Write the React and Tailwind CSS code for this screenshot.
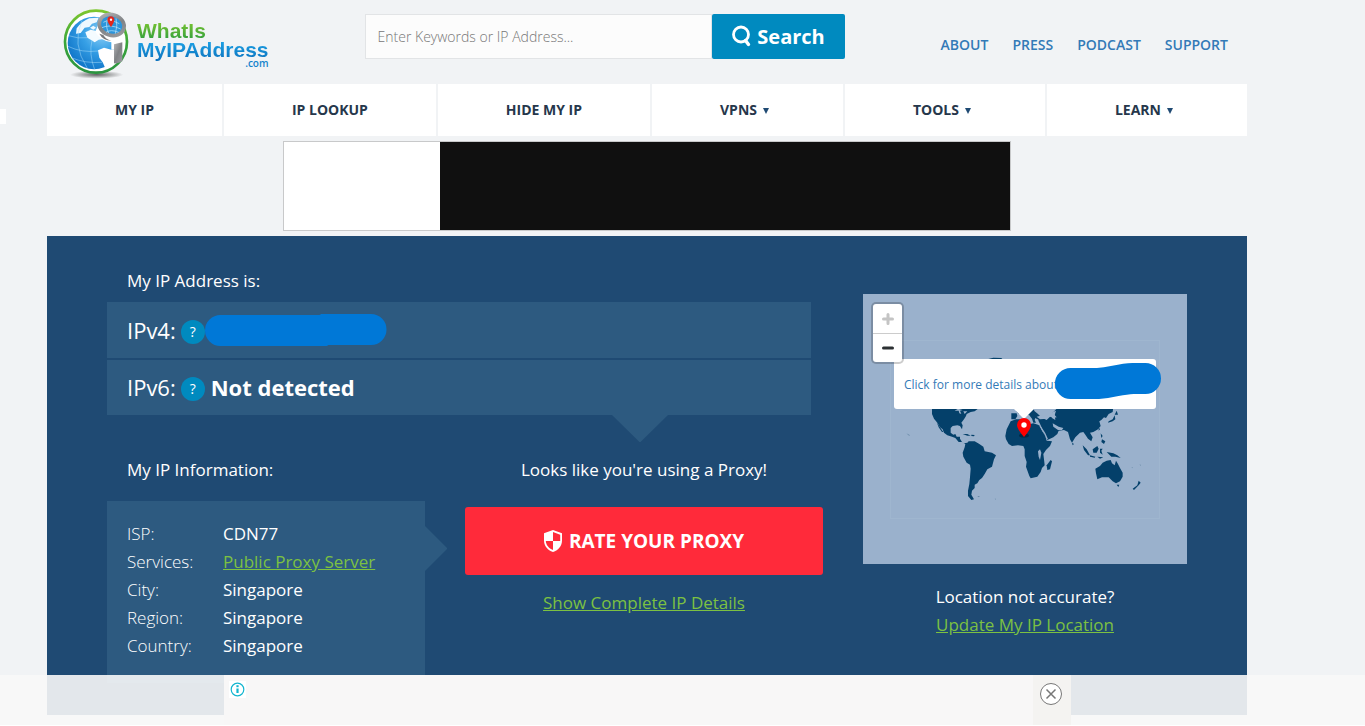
const infoRows = [
  ["ISP:", "CDN77"],
  ["Services:", "Public Proxy Server"],
  ["City:", "Singapore"],
  ["Region:", "Singapore"],
  ["Country:", "Singapore"],
];

const menu = [
  ["MY IP", false],
  ["IP LOOKUP", false],
  ["HIDE MY IP", false],
  ["VPNS", true],
  ["TOOLS", true],
  ["LEARN", true],
];

function LogoMark() {
  return (
    <svg className="h-[72px] w-[68px] shrink-0" viewBox="36 20 204 216" aria-hidden="true">
      <defs>
        <linearGradient id="ring" x1="0" y1="0" x2="0" y2="1">
          <stop offset="0" stopColor="#7cc62e" />
          <stop offset="0.5" stopColor="#3aa63a" />
          <stop offset="1" stopColor="#2c9440" />
        </linearGradient>
        <radialGradient id="sea" cx="0.65" cy="0.3" r="0.8">
          <stop offset="0" stopColor="#8fd0f6" />
          <stop offset="0.45" stopColor="#37a0e6" />
          <stop offset="1" stopColor="#0a6fc4" />
        </radialGradient>
        <radialGradient id="shade">
          <stop offset="0" stopColor="#333" stopOpacity="0.75" />
          <stop offset="1" stopColor="#333" stopOpacity="0" />
        </radialGradient>
        <linearGradient id="metal" x1="0" y1="0" x2="1" y2="1">
          <stop offset="0" stopColor="#b5b6b8" />
          <stop offset="0.5" stopColor="#808285" />
          <stop offset="1" stopColor="#9b9da0" />
        </linearGradient>
      </defs>
      <ellipse cx="140" cy="223" rx="80" ry="12" fill="url(#shade)" />
      <circle cx="138" cy="124" r="93" fill="#fff" stroke="url(#ring)" strokeWidth="8" />
      <circle cx="132" cy="128" r="79" fill="url(#sea)" />
      <path d="M80 84Q96 62 118 54L146 52L140 66L126 70L118 80L104 82L92 98L78 100Z" fill="#eef8fe" />
      <path d="M106 96L122 88L138 92L152 104L160 116L146 118L134 126L122 118L112 112Z" fill="#f4fbff" />
      <path d="M120 82l10-6 8 6-8 6z" fill="#eef8fe" />
      <path d="M144 150L162 142L184 148L212 150L206 176Q192 196 166 204L158 186L148 172Z" fill="#fff" />
      <path d="M54 138Q96 158 144 152M64 172Q106 190 156 186M96 60Q64 130 112 204M126 120Q116 160 134 208M56 106Q84 116 112 112" fill="none" stroke="#a9dcf8" strokeWidth="1.5" />
      <path d="M136 94Q150 120 184 126V148H222L220 116L224 80L150 60Z" fill="#fff" />
      <path d="M148 100Q158 120 184 121Q166 116 160 104Z" fill="#77797c" />
      <path d="M192 132L217 126V183Q206 190 192 189Z" fill="url(#metal)" />
      <ellipse cx="185" cy="74" rx="38" ry="31" transform="rotate(18 185 74)" fill="#2b95dc" stroke="url(#metal)" strokeWidth="11" />
      <path d="M160 66Q178 54 208 70M156 82Q180 70 212 86M168 96Q182 86 206 96M174 54Q164 74 176 98M198 54Q204 76 196 100" fill="none" stroke="#c3e8fb" strokeWidth="2" />
      <path d="M183 80Q172 65 172 58A10.500 10.500 0 0 1 193 58Q193 65 183 80Z" fill="#e1261c" />
      <circle cx="183" cy="58" r="3.500" fill="#fff" />
    </svg>
  );
}

function WorldMap() {
  return (
    <svg className="absolute inset-0 h-full w-full" viewBox="0 0 324 270" aria-hidden="true">
      <rect x="27.500" y="46.500" width="269" height="178" fill="none" stroke="#9fb6cf" />
      <g transform="translate(-3 46) scale(.33333)" fill="#04406a">
        <path d="M382 58L400 53L424 54L430 60H382Z" />
        <path d="M216 200L216 222L222 236L232 248L240 262L248 268L252 278L262 286L276 290L286 294L296 306L306 306L300 296L300 290L290 290L286 282L280 284L272 278L272 264L278 258L292 256L300 258L306 268L308 256L304 248L312 238L318 228L320 222L332 216L344 214L354 206L354 200Z" />
        <path d="M230 246L240 262L250 276L246 276L236 262Z" />
        <path d="M308 282l14 0 10 5-10 0zM334 284l10 1-2 4-8-1z" />
        <path d="M300 304L312 310L322 308L326 304L344 304L358 312L370 320L374 334L396 338L408 346L402 358L396 380L382 388L374 402L366 414L358 420L352 430L344 434L344 444L336 452L334 464L342 478L334 480L324 468L324 452L328 432L330 412L332 386L330 374L320 368L310 350L308 338L314 322L316 312Z" />
        <path d="M454 220H470L472 228L466 238H454ZM468 212L480 206H520L524 214L534 222L540 228L548 228V238L532 238L526 234L524 240L528 248L520 248L516 236L508 226L500 222L494 214L484 222L476 222Z" />
        <path d="M452 244L468 238L488 238L496 240L498 248L510 252L520 250L534 254L540 258L546 272L556 288L560 302L576 304L570 318L558 330L550 342L552 358L554 376L546 384L542 396L532 410L512 415L508 408L498 380L500 366L494 348L494 328L490 318L474 316L456 318L446 312L438 298L436 288L440 268Z" />
        <path d="M572 360L576 364L570 388L562 390L560 376Z" />
        <path d="M542 256L536 244L534 236L552 236L560 240L570 230L580 234L590 232L578 218L590 206L600 200L760 200L758 216L746 222L738 234L732 232L724 240L718 244L722 258L714 268L700 276L690 278L698 292L694 304L684 296L676 284L670 276L660 278L646 292L636 308L630 298L624 276L612 270L596 272L592 282L580 292L562 300L552 282Z" />
        <path d="M578 216L588 212L584 226L586 240L576 234ZM530 230l16-4 24 2-10 8-20 2z" fill="#9ab1cc" />
        <path d="M578 250l18 10 14 4-4 6-12 0-14-10z" fill="#9ab1cc" />
        <path d="M540 258L554 280L562 298" fill="none" stroke="#9ab1cc" strokeWidth="4" />
        <path d="M534 334l6-6 4 10-4 22-4-10z" fill="#9ab1cc" />
        <path d="M284 212l10-6 14 4-8 2 4 10-6-2-2-8zM310 214l12 0-8 8z" fill="#9ab1cc" />
        <path d="M770 212l4 12-10 0zM764 226l2 12-8 6-14 4 2-4 12-6zM716 262l4 6-4 4zM722 280l6 8-4 6zM726 298l10 6-4 8-8-6zM636 308l6 4-4 4z" />
        <path d="M668 316L680 328L690 346L684 346L672 330ZM690 346L706 350L704 353L690 350ZM698 328L712 318L716 326L710 338L700 338ZM720 326l8 0-4 6 4 12-8-6zM712 350l18 2-10 4zM740 336L760 340L772 346L782 354L766 350L754 350Z" />
        <path d="M706 386L720 378L728 368L740 362L752 360L756 370L764 376L768 362L774 372L780 384L788 398L788 410L780 424L768 430L758 424L746 412L726 412L712 418L708 400Z" />
        <path d="M770 434l8 0-3 7zM836 422l6 6-6 8-14 14-4-4 14-10z" />
        <path d="M139 280l10 5-1 3zM286 331h6M352 468l8 0-4 4zM404 476h4v3zM814 382h4v3zM838 374h5v3zM786 346l20 8" fill="#6688a6" />
      </g>
    </svg>
  );
}

function Marker() {
  return (
    <svg className="absolute left-[153px] top-[123px] h-[22px] w-4" viewBox="0 0 16 22" role="img" aria-label="Location">
      <ellipse cx="8" cy="18.500" rx="5" ry="2" fill="#001c30" opacity="0.6" />
      <path d="M8 20Q1 12 1 8A7 7 0 0 1 15 8Q15 12 8 20Z" fill="#f00" />
      <circle cx="8" cy="8" r="2.700" fill="#fff" />
    </svg>
  );
}

function HelpButton({ label }) {
  return (
    <button aria-label={label} className="mt-1 ml-[5px] h-6 w-6 shrink-0 rounded-full bg-[#008abf] text-sm leading-6">
      ?
    </button>
  );
}

export default function App() {
  return (
    <div className="relative min-h-screen bg-[#f1f3f5] pr-[71px] font-['Open_Sans',sans-serif]">
      <div className="absolute left-0 top-[109px] h-[15px] w-1.5 bg-white" />

      <div className="mx-auto max-w-[1200px] pb-[11px]">
        <header className="flex h-[84px] items-start justify-between pl-[15px] pr-[19px]">
          <a href="#" aria-label="WhatIsMyIPAddress.com" className="flex pt-[7px]">
            <LogoMark />
            <span className="ml-[7px] flex flex-col pt-[14px] font-['Liberation_Sans',sans-serif] text-[21px] leading-[19px] font-bold">
              <span className="self-start bg-linear-to-b from-[#7cc62e] to-[#2c9f3c] bg-clip-text text-transparent">WhatIs</span>
              <span className="-mb-1 bg-linear-to-b from-[#1fa5e8] to-[#0b6cb8] bg-clip-text pb-1 text-transparent">MyIPAddress</span>
              <span className="self-end font-['Open_Sans',sans-serif] text-[10px] leading-[8px] font-semibold text-[#1583cc]">.com</span>
            </span>
          </a>

          <form className="mt-[14px] flex h-[45px] w-[480px]">
            <input
              type="text"
              aria-label="Enter Keywords or IP Address"
              placeholder="Enter Keywords or IP Address..."
              className="min-w-0 flex-1 border border-[#e2e4e6] bg-[#fcfcfc] px-3 text-sm font-light placeholder:text-[#777]"
            />
            <button type="button" className="flex w-[133px] items-center justify-center gap-1 rounded-[2px] bg-[#008abf] text-xl font-bold text-white">
              <svg className="h-6 w-[22px]" viewBox="0 0 22 24" fill="none" stroke="currentColor" aria-hidden="true">
                <circle cx="10" cy="9.500" r="7.500" strokeWidth="2.800" />
                <path d="M14.500 15.500L17.500 19.500" strokeWidth="3.400" strokeLinecap="round" />
              </svg>
              Search
            </button>
          </form>

          <nav className="flex gap-6 pt-[34px] text-sm leading-[22px] font-semibold text-[#337ab7]">
            <a href="#">ABOUT</a>
            <a href="#">PRESS</a>
            <a href="#">PODCAST</a>
            <a href="#">SUPPORT</a>
          </nav>
        </header>

        <nav className="flex gap-0.5 text-sm font-bold text-[#26374b]">
          {menu.map(([label, drop]) => (
            <a key={label} href="#" className="flex h-[52px] flex-auto items-center justify-center gap-1.5 bg-white">
              {label}
              {drop && (
                <svg className="mt-0.5 mr-1.5 h-1.5 w-1.5" viewBox="0 0 6 6" fill="#1f4a73" aria-hidden="true">
                  <path d="M0 0H6L3 6Z" />
                </svg>
              )}
            </a>
          ))}
        </nav>

        <div className="mx-auto mt-[5px] flex h-[90px] max-w-[728px] border border-[#c8c9ca] bg-white pl-[156px]">
          <div className="flex-1 bg-[#101010]" />
        </div>

        <main className="mt-[5px] flex gap-10 bg-[#1f4a73] px-[60px] pb-8 text-[17px] leading-7 text-white">
          <div className="min-w-0 flex-1 pt-[31px]">
            <h1 className="pl-5">My IP Address is:</h1>
            <div className="relative mt-[7px] mr-3 flex flex-col gap-0.5 text-[22px]">
              <div className="flex h-14 items-center bg-[#2d5a80] pl-5">
                <span>IPv4:</span>
                <HelpButton label="What is IPv4?" />
                <svg className="h-8 w-[182px]" viewBox="0 0 182 32" aria-hidden="true">
                  <path d="M15.500 16.500H118L120 15.500H166" fill="none" stroke="#0078d7" strokeWidth="31" strokeLinecap="round" />
                </svg>
              </div>
              <div className="flex h-[55px] items-center bg-[#2d5a80] pb-0.5 pl-5">
                <span>IPv6:</span>
                <HelpButton label="What is IPv6?" />
                <strong className="ml-1.5 font-bold">Not detected</strong>
              </div>
              <svg className="absolute top-full right-[143px] h-[27px] w-14" viewBox="0 0 56 27" fill="#2d5a80" aria-hidden="true">
                <path d="M0 0H56L28 27.500Z" />
              </svg>
            </div>

            <div className="mt-[41px] flex gap-10">
              <section className="w-[318px] shrink-0">
                <h2 className="pl-5">My IP Information:</h2>
                <div className="relative mt-[17px] bg-[#2d5a80] px-5 pt-[19px] pb-[23px]">
                  <dl className="grid grid-cols-[96px_1fr]">
                    {infoRows.map(([k, v]) => (
                      <div key={k} className="contents">
                        <dt className="font-light">{k}</dt>
                        <dd>{k === "Services:" ? <a href="#" className="text-[#7cc142] underline">{v}</a> : v}</dd>
                      </div>
                    ))}
                  </dl>
                  <svg className="absolute top-6 left-full h-[46px] w-[22px]" viewBox="0 0 22 46" fill="#2d5a80" aria-hidden="true">
                    <path d="M0 1L22.500 23.500L0 46Z" />
                  </svg>
                </div>
              </section>
              <section className="flex min-w-0 flex-1 flex-col items-center">
                <h2>Looks like you're using a Proxy!</h2>
                <button className="mt-[23px] flex h-[68px] w-full items-center justify-center gap-[7px] rounded-[3px] bg-[#ff2a3a] text-[19px] font-bold">
                  <svg className="h-[22px] w-[18px]" viewBox="0 0 18 22" aria-hidden="true">
                    <path d="M9 0L18 3.300V10.500C18 16 14.500 20 9 22C3.500 20 0 16 0 10.500V3.300Z" fill="#fff" />
                    <path d="M9 2L16.200 4.700V11H9V20C4.800 18.200 2 15 1.800 11H9Z" fill="#ff2a3a" />
                  </svg>
                  RATE YOUR PROXY
                </button>
                <a href="#" className="mt-[14px] text-[#7cc142] underline">Show Complete IP Details</a>
              </section>
            </div>
          </div>

          <aside className="w-[324px] shrink-0 pt-[58px] text-center">
            <div className="relative h-[270px] bg-[#9ab1cc]">
              <WorldMap />
              <div className="absolute top-[65px] left-[31px] flex h-[50px] w-[262px] items-center rounded-[3px] bg-white pt-0.5 pl-2.5 text-xs">
                <a href="#" className="text-[#337ab7]">Click for more details about</a>
              </div>
              <svg className="absolute top-[115px] left-[151px] h-2.5 w-5" viewBox="0 0 20 10" fill="#fff" aria-hidden="true">
                <path d="M0 0H20L10 10Z" />
              </svg>
              <svg className="absolute top-[68px] left-[190px] h-[38px] w-[110px]" viewBox="0 0 110 38" aria-hidden="true">
                <path d="M17.500 21.500H45C60 20.500 66 17 80 16.500H92.500" fill="none" stroke="#0078d7" strokeWidth="31" strokeLinecap="round" />
              </svg>
              <Marker />
              <div className="absolute top-2.5 left-2.5 flex w-[29px] flex-col rounded-[3px] bg-white shadow-[0_0_0_2px_rgba(0,0,0,0.2)]">
                <button aria-label="Zoom in" className="flex h-[30px] items-center justify-center border-b border-[#ccc]">
                  <svg className="h-3 w-3" viewBox="0 0 12 12" stroke="#c4c4c4" strokeWidth="3" strokeLinecap="round" aria-hidden="true">
                    <path d="M1.500 6H10.500M6 1.500V10.500" />
                  </svg>
                </button>
                <button aria-label="Zoom out" className="flex h-7 items-center justify-center">
                  <svg className="h-3 w-3" viewBox="0 0 12 12" stroke="#2c3033" strokeWidth="3" strokeLinecap="round" aria-hidden="true">
                    <path d="M1.500 6H10.500" />
                  </svg>
                </button>
              </div>
            </div>
            <p className="mt-[19px]">Location not accurate?</p>
            <a href="#" className="text-[#7cc142] underline">Update My IP Location</a>
          </aside>
        </main>
      </div>

      <div className="fixed inset-x-0 bottom-0 flex h-[51px] border-b border-white bg-[#f8f8f8]/90 pr-[70px]">
        <div className="mx-auto flex w-[847px] justify-between bg-[#f8f7f7]">
          <button aria-label="Ad information" className="ml-[5px] mt-1.5 flex h-[17px] w-[17px] items-center justify-center bg-white">
            <svg className="h-[15px] w-[15px]" viewBox="0 0 15 15" fill="none" stroke="#12b5cf" aria-hidden="true">
              <circle cx="7.500" cy="7.500" r="6.300" strokeWidth="1.200" />
              <path d="M7.500 6.500V11" strokeWidth="2.200" />
              <path d="M7.500 3.200V5.200" strokeWidth="2.200" />
            </svg>
          </button>
          <div className="flex w-[38px] bg-[#f4f3f1] pt-2 pl-[7px]">
            <button aria-label="Close ad" className="h-[22px] w-[22px]">
              <svg viewBox="0 0 22 22" fill="#fff" stroke="#777" aria-hidden="true">
                <circle cx="11" cy="11" r="10.500" />
                <path d="M6.500 6.500L15.500 15.500M15.500 6.500L6.500 15.500" strokeWidth="1.500" />
              </svg>
            </button>
          </div>
        </div>
      </div>
    </div>
  );
}
